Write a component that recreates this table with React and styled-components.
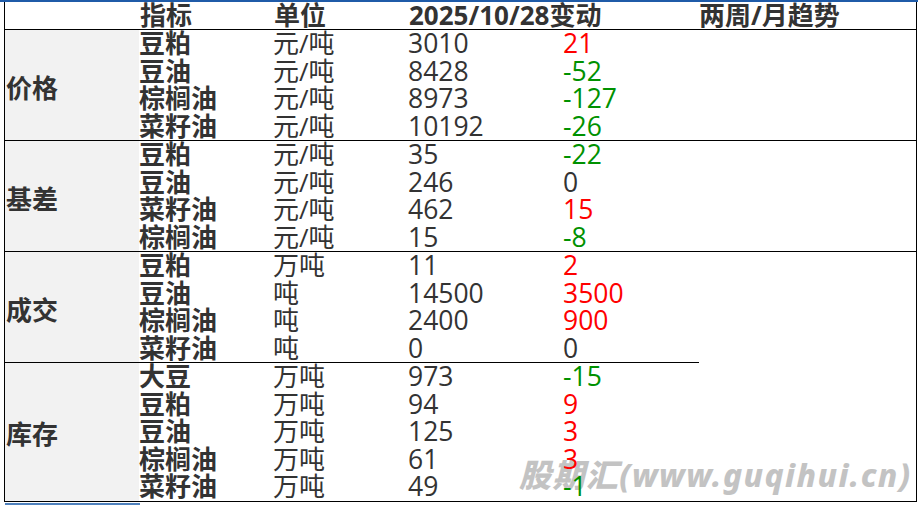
import React from "react";
import styled, { createGlobalStyle } from "styled-components";

const GlobalStyle = createGlobalStyle`
  html, body {
    margin: 0;
    padding: 0;
    background: #ffffff;
    overflow: hidden;
  }
`;

const FONT = `"Open Sans", "Noto Sans CJK SC", sans-serif`;

const COLORS = {
  text: "#333333",
  up: "#ff0000",
  down: "#009100",
  grid: "#000000",
  side: "#f2f2f2",
  blue: "#1f5ba8",
  tab: "#4f81bd",
};

const COLS = "134px 135px 155px 135px";

const Page = styled.div`
  position: relative;
  width: 922px;
  height: 505px;
  font-family: ${FONT};
  color: ${COLORS.text};
`;

const TopBar = styled.div`
  width: 918px;
  height: 2px;
  background: ${COLORS.blue};
`;

const Table = styled.div`
  position: relative;
  z-index: 1;
  margin-left: 4px;
  width: 911px;
  border-left: 1px solid ${COLORS.grid};
  border-right: 1px solid ${COLORS.grid};
  border-bottom: 1px solid ${COLORS.grid};
`;

const HeaderRow = styled.div`
  display: grid;
  grid-template-columns: 135px ${COLS} 1fr;
  height: 27px;
  line-height: 27px;
  font-size: 26px;
  font-weight: 700;
  white-space: nowrap;
  border-bottom: 1px solid ${COLORS.grid};
`;

const HeadCell = styled.div`
  grid-column: ${(p) => p.$span || "auto"};
`;

const Section = styled.div`
  display: flex;
  border-bottom: ${(p) => (p.$cut || p.$last ? "none" : `1px solid ${COLORS.grid}`)};
`;

const Main = styled.div`
  display: flex;
  width: 694px;
  border-bottom: ${(p) => (p.$cut ? `1px solid ${COLORS.grid}` : "none")};
`;

const Category = styled.div`
  display: flex;
  align-items: center;
  width: 134px;
  padding: 3px 0 0 1px;
  box-sizing: border-box;
  background: ${COLORS.side};
  font-size: 26px;
  font-weight: 700;
`;

const Rows = styled.div`
  display: flex;
  flex-direction: column;
`;

const Row = styled.div`
  display: grid;
  grid-template-columns: ${COLS};
  height: 27.5px;
  line-height: 27.5px;
  font-size: 26px;
  white-space: nowrap;
`;

const Item = styled.div`
  font-weight: 700;
`;

const Cell = styled.div`
  font-size: ${(p) => (p.$num ? "26.5px" : "26px")};
`;

const Change = styled.div`
  font-size: 26.5px;
  color: ${(p) => (p.$dir > 0 ? COLORS.up : p.$dir < 0 ? COLORS.down : COLORS.text)};
`;

const Trend = styled.div`
  flex: 1;
`;

const SheetTab = styled.div`
  width: 135px;
  height: 3px;
  margin: 1px 0 0 5px;
  background: ${COLORS.tab};
`;

const Watermark = styled.div`
  position: absolute;
  left: 519px;
  top: 459px;
  z-index: 0;
  font-family: "Noto Sans", "Noto Sans CJK SC", sans-serif;
  font-size: 32px;
  line-height: 32px;
  font-weight: 800;
  font-style: italic;
  letter-spacing: 1.4px;
  color: #c3c3c3;
  white-space: nowrap;
`;

const sections = [
  {
    name: "价格",
    rows: [
      ["豆粕", "元/吨", "3010", "21"],
      ["豆油", "元/吨", "8428", "-52"],
      ["棕榈油", "元/吨", "8973", "-127"],
      ["菜籽油", "元/吨", "10192", "-26"],
    ],
  },
  {
    name: "基差",
    rows: [
      ["豆粕", "元/吨", "35", "-22"],
      ["豆油", "元/吨", "246", "0"],
      ["菜籽油", "元/吨", "462", "15"],
      ["棕榈油", "元/吨", "15", "-8"],
    ],
  },
  {
    name: "成交",
    cut: true,
    rows: [
      ["豆粕", "万吨", "11", "2"],
      ["豆油", "吨", "14500", "3500"],
      ["棕榈油", "吨", "2400", "900"],
      ["菜籽油", "吨", "0", "0"],
    ],
  },
  {
    name: "库存",
    rows: [
      ["大豆", "万吨", "973", "-15"],
      ["豆粕", "万吨", "94", "9"],
      ["豆油", "万吨", "125", "3"],
      ["棕榈油", "万吨", "61", "3"],
      ["菜籽油", "万吨", "49", "-1"],
    ],
  },
];

const App = () => {
  return (
    <Page>
      <GlobalStyle />
      <TopBar />
      <Watermark>股期汇(www.guqihui.cn)</Watermark>
      <Table>
        <HeaderRow>
          <HeadCell />
          <HeadCell>指标</HeadCell>
          <HeadCell>单位</HeadCell>
          <HeadCell $span="span 2">2025/10/28变动</HeadCell>
          <HeadCell>两周/月趋势</HeadCell>
        </HeaderRow>
        {sections.map((section, i) => (
          <Section
            key={section.name}
            $cut={section.cut}
            $last={i === sections.length - 1}
          >
            <Main $cut={section.cut}>
              <Category>{section.name}</Category>
              <Rows>
                {section.rows.map(([item, unit, value, change], j) => (
                  <Row key={j}>
                    <Item>{item}</Item>
                    <Cell>{unit}</Cell>
                    <Cell $num>{value}</Cell>
                    <Change $dir={Math.sign(Number(change))}>{change}</Change>
                  </Row>
                ))}
              </Rows>
            </Main>
            <Trend />
          </Section>
        ))}
      </Table>
      <SheetTab />
    </Page>
  );
};

export default App;
